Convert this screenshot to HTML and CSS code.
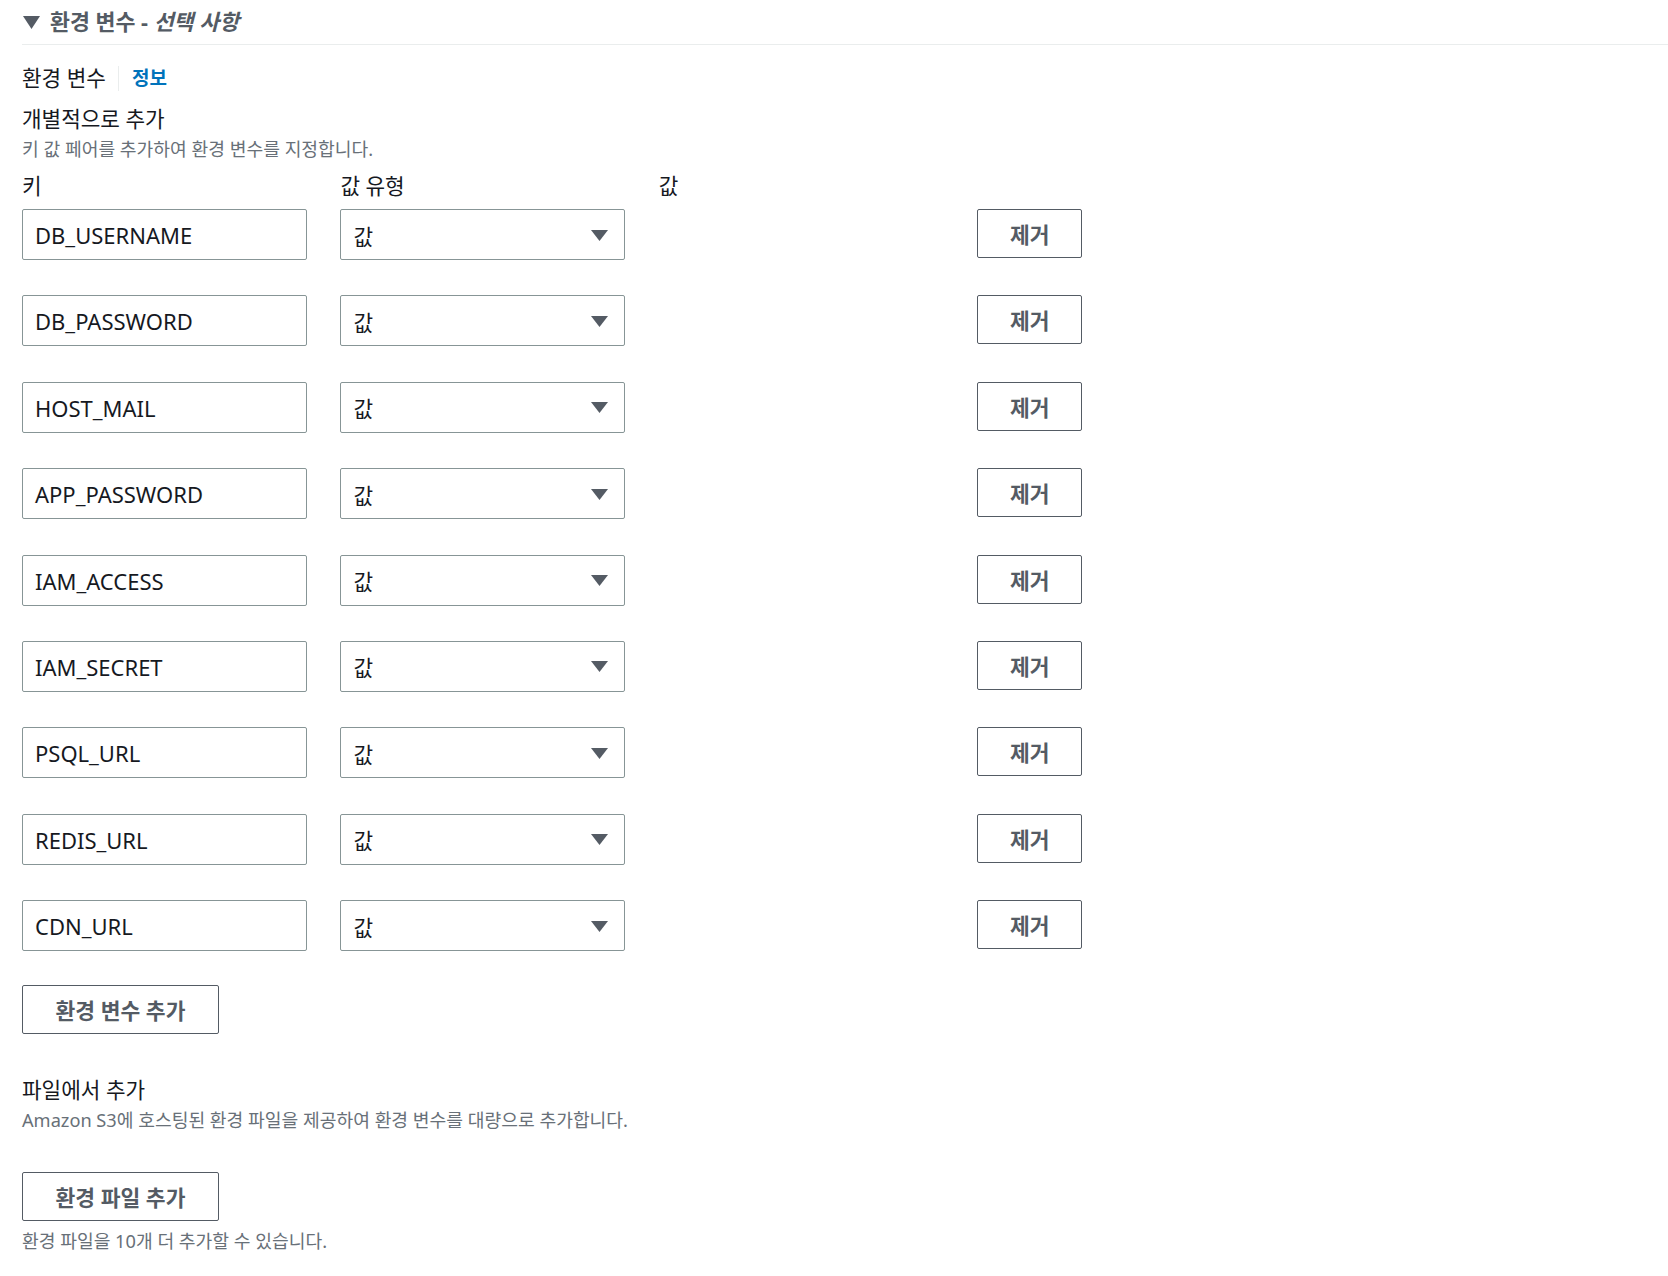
FILE: index.html
```html
<!DOCTYPE html>
<html lang="ko">
<head>
<meta charset="utf-8">
<link rel="stylesheet" href="styles.css">
</head>
<body>
<section class="section">
  <div class="section-header">
    <svg class="caret" width="17" height="13" viewBox="0 0 17 13"><polygon points="0,0 17,0 8.5,13" fill="#545b64"/></svg>
    <span class="section-title">환경 변수 - <em>선택 사항</em></span>
  </div>

  <div class="field-label">
    <span>환경 변수</span>
    <span class="sep"></span>
    <a class="info">정보</a>
  </div>

  <div class="group-title">개별적으로 추가</div>
  <div class="desc">키 값 페어를 추가하여 환경 변수를 지정합니다.</div>

  <div class="grid head">
    <div>키</div>
    <div>값 유형</div>
    <div>값</div>
    <div></div>
  </div>

  <div class="rows">
    <div class="grid row">
      <div class="input">DB_USERNAME</div>
      <div class="select"><span>값</span><svg class="arrow" width="17" height="11" viewBox="0 0 17 11"><polygon points="0,0 17,0 8.5,11" fill="#545b64"/></svg></div>
      <div></div>
      <button class="btn">제거</button>
    </div>
    <div class="grid row">
      <div class="input">DB_PASSWORD</div>
      <div class="select"><span>값</span><svg class="arrow" width="17" height="11" viewBox="0 0 17 11"><polygon points="0,0 17,0 8.5,11" fill="#545b64"/></svg></div>
      <div></div>
      <button class="btn">제거</button>
    </div>
    <div class="grid row">
      <div class="input">HOST_MAIL</div>
      <div class="select"><span>값</span><svg class="arrow" width="17" height="11" viewBox="0 0 17 11"><polygon points="0,0 17,0 8.5,11" fill="#545b64"/></svg></div>
      <div></div>
      <button class="btn">제거</button>
    </div>
    <div class="grid row">
      <div class="input">APP_PASSWORD</div>
      <div class="select"><span>값</span><svg class="arrow" width="17" height="11" viewBox="0 0 17 11"><polygon points="0,0 17,0 8.5,11" fill="#545b64"/></svg></div>
      <div></div>
      <button class="btn">제거</button>
    </div>
    <div class="grid row">
      <div class="input">IAM_ACCESS</div>
      <div class="select"><span>값</span><svg class="arrow" width="17" height="11" viewBox="0 0 17 11"><polygon points="0,0 17,0 8.5,11" fill="#545b64"/></svg></div>
      <div></div>
      <button class="btn">제거</button>
    </div>
    <div class="grid row">
      <div class="input">IAM_SECRET</div>
      <div class="select"><span>값</span><svg class="arrow" width="17" height="11" viewBox="0 0 17 11"><polygon points="0,0 17,0 8.5,11" fill="#545b64"/></svg></div>
      <div></div>
      <button class="btn">제거</button>
    </div>
    <div class="grid row">
      <div class="input">PSQL_URL</div>
      <div class="select"><span>값</span><svg class="arrow" width="17" height="11" viewBox="0 0 17 11"><polygon points="0,0 17,0 8.5,11" fill="#545b64"/></svg></div>
      <div></div>
      <button class="btn">제거</button>
    </div>
    <div class="grid row">
      <div class="input">REDIS_URL</div>
      <div class="select"><span>값</span><svg class="arrow" width="17" height="11" viewBox="0 0 17 11"><polygon points="0,0 17,0 8.5,11" fill="#545b64"/></svg></div>
      <div></div>
      <button class="btn">제거</button>
    </div>
    <div class="grid row">
      <div class="input">CDN_URL</div>
      <div class="select"><span>값</span><svg class="arrow" width="17" height="11" viewBox="0 0 17 11"><polygon points="0,0 17,0 8.5,11" fill="#545b64"/></svg></div>
      <div></div>
      <button class="btn">제거</button>
    </div>
  </div>

  <button class="btn btn-wide">환경 변수 추가</button>

  <div class="group-title file-title">파일에서 추가</div>
  <div class="desc">Amazon S3에 호스팅된 환경 파일을 제공하여 환경 변수를 대량으로 추가합니다.</div>

  <button class="btn btn-wide file-btn">환경 파일 추가</button>
  <div class="desc note">환경 파일을 10개 더 추가할 수 있습니다.</div>
</section>
</body>
</html>
```

FILE: styles.css
```css
html, body {
  margin: 0;
  padding: 0;
  background: #ffffff;
}

body {
  font-family: "Noto Sans", "Noto Sans CJK KR", sans-serif;
  color: #16191f;
}

.section {
  padding-left: 22px;
}

.section-header {
  display: flex;
  align-items: center;
  gap: 10px;
  padding: 8px 0 8px 1px;
  height: 28px;
  border-bottom: 1px solid #eaeded;
}

.caret {
  display: block;
}

.section-title {
  font-size: 21.7px;
  font-weight: 700;
  color: #545b64;
  line-height: 28px;
}

.section-title em {
  font-style: italic;
}

.field-label {
  display: flex;
  align-items: center;
  margin-top: 19px;
  height: 28px;
  font-size: 21.3px;
  line-height: 28px;
}

.sep {
  width: 1px;
  height: 25px;
  background: #eaeded;
  margin: 0 13px 0 12px;
}

.info {
  color: #0073bb;
  font-weight: 700;
  font-size: 19px;
}

.group-title {
  margin-top: 13px;
  font-size: 21.3px;
  line-height: 28px;
}

.desc {
  margin-top: 4px;
  font-size: 18.2px;
  line-height: 24px;
  color: #687078;
}

.grid {
  display: grid;
  grid-template-columns: 285px 285px 285px 105px;
  column-gap: 33.4px;
  align-items: start;
}

.head {
  margin-top: 11px;
  font-size: 21.3px;
  line-height: 28px;
}

.rows {
  margin-top: 9px;
  display: flex;
  flex-direction: column;
  gap: 35.4px;
}

.input,
.select {
  box-sizing: border-box;
  height: 51px;
  border: 1px solid #879596;
  border-radius: 2px;
  display: flex;
  align-items: center;
  padding: 1px 16px 0 12px;
  font-size: 22px;
  color: #16191f;
}

.select {
  justify-content: space-between;
  font-size: 21.3px;
}

.arrow {
  display: block;
}

.btn {
  box-sizing: border-box;
  height: 49px;
  border: 1px solid #545b64;
  border-radius: 2px;
  background: #ffffff;
  color: #545b64;
  font-family: "Noto Sans", "Noto Sans CJK KR", sans-serif;
  font-weight: 700;
  font-size: 21.5px;
  padding: 0;
}

.btn-wide {
  display: block;
  width: 197px;
  margin-top: 34px;
}

.file-title {
  margin-top: 42px;
}

.file-btn {
  margin-top: 40px;
}

.note {
  margin-top: 8px;
}
```
